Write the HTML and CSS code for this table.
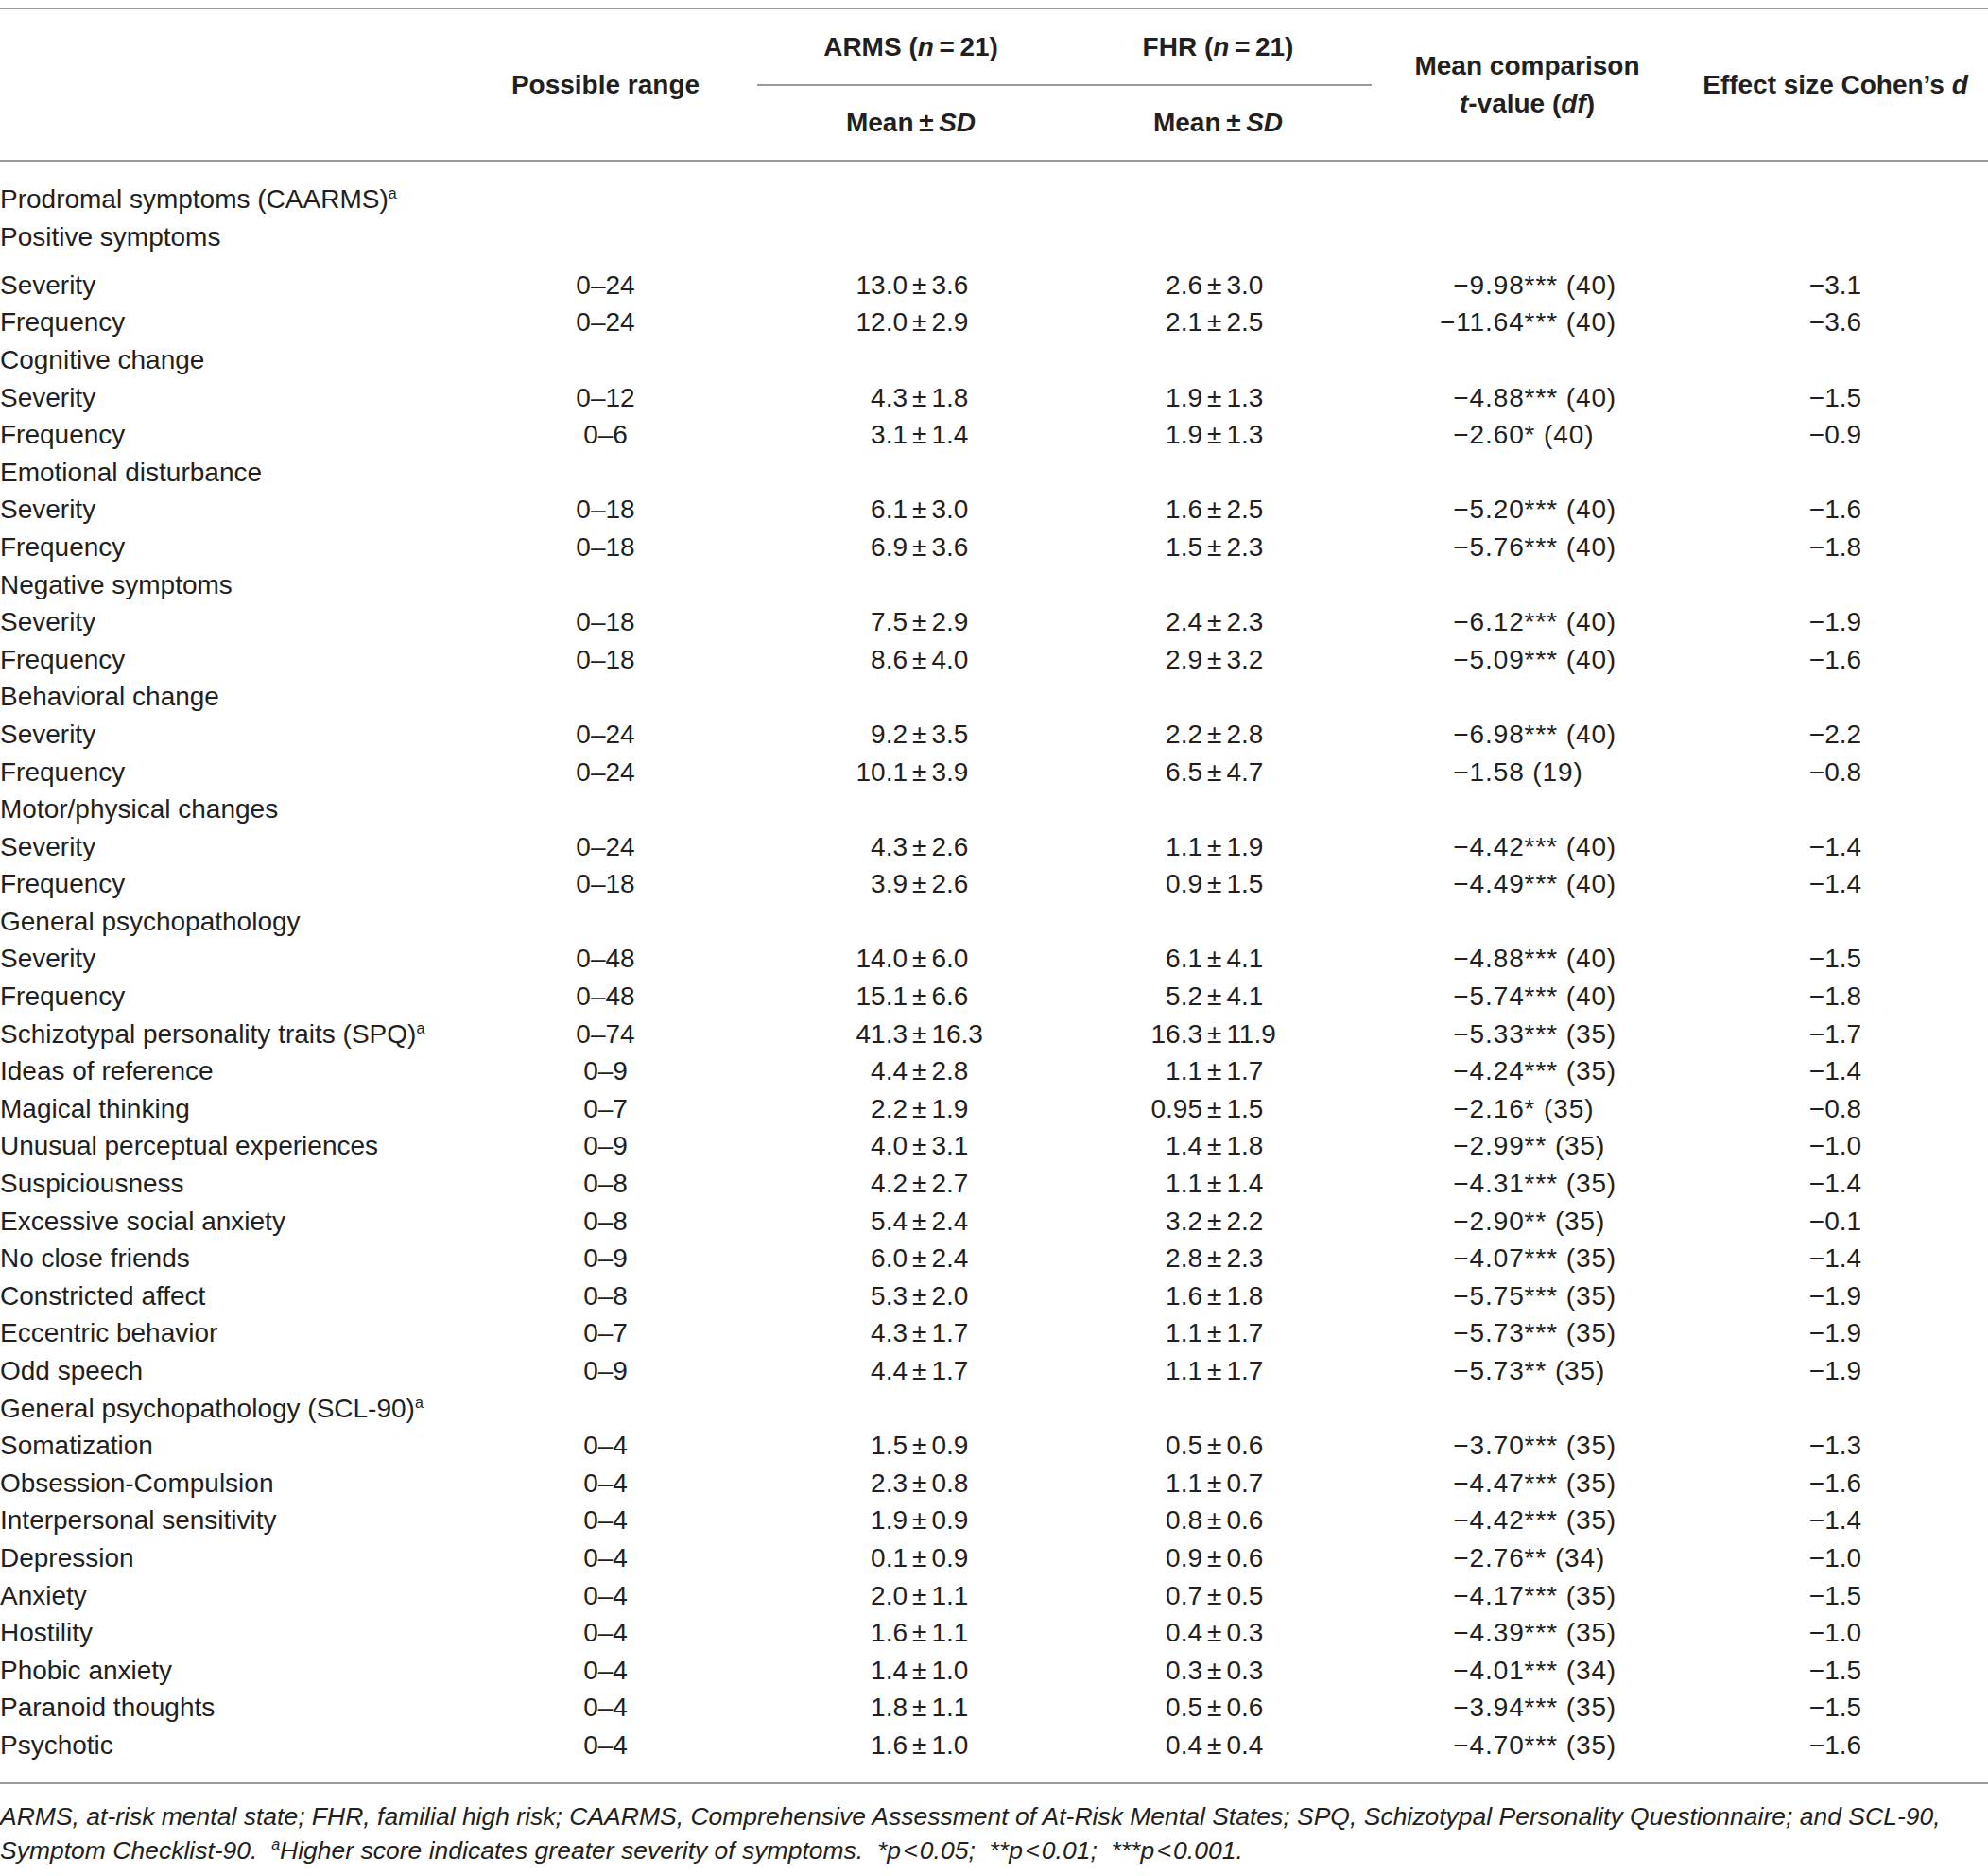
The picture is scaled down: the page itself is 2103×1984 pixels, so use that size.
FILE: index.html
```html
<!DOCTYPE html>
<html lang="en">
<head>
<meta charset="utf-8">
<title>ARMS vs FHR comparison</title>
<link rel="stylesheet" href="styles.css">
</head>
<body>
<table class="data">
  <colgroup>
    <col class="c-label"><col class="c-range"><col class="c-arms"><col class="c-fhr"><col class="c-t"><col class="c-d">
  </colgroup>
  <thead>
    <tr class="h1">
      <th></th>
      <th rowspan="2">Possible range</th>
      <th class="grp">ARMS (<i>n</i>&#8201;=&#8201;21)</th>
      <th class="grp">FHR (<i>n</i>&#8201;=&#8201;21)</th>
      <th rowspan="2" class="two">Mean comparison<br><i>t</i>-value (<i>df</i>)</th>
      <th rowspan="2">Effect size Cohen’s <i>d</i></th>
    </tr>
    <tr class="h2">
      <th></th>
      <th>Mean&#8201;±&#8201;<i>SD</i></th>
      <th>Mean&#8201;±&#8201;<i>SD</i></th>
    </tr>
  </thead>
  <tbody>
    <tr class="first"><td>Prodromal symptoms (CAARMS)<sup class="fn">a</sup></td><td></td><td></td><td></td><td></td><td></td></tr>
    <tr class="gap"><td>Positive symptoms</td><td></td><td></td><td></td><td></td><td></td></tr>
    <tr><td>Severity</td><td class="rg">0–24</td><td class="ms a"><span class="ml">13.0</span><span class="pm">±</span>3.6</td><td class="ms f"><span class="ml">2.6</span><span class="pm">±</span>3.0</td><td class="tv"><span class="tl">−9</span>.98*** (40)</td><td class="es">−3.1</td></tr>
    <tr><td>Frequency</td><td class="rg">0–24</td><td class="ms a"><span class="ml">12.0</span><span class="pm">±</span>2.9</td><td class="ms f"><span class="ml">2.1</span><span class="pm">±</span>2.5</td><td class="tv"><span class="tl">−11</span>.64*** (40)</td><td class="es">−3.6</td></tr>
    <tr><td>Cognitive change</td><td></td><td></td><td></td><td></td><td></td></tr>
    <tr><td>Severity</td><td class="rg">0–12</td><td class="ms a"><span class="ml">4.3</span><span class="pm">±</span>1.8</td><td class="ms f"><span class="ml">1.9</span><span class="pm">±</span>1.3</td><td class="tv"><span class="tl">−4</span>.88*** (40)</td><td class="es">−1.5</td></tr>
    <tr><td>Frequency</td><td class="rg">0–6</td><td class="ms a"><span class="ml">3.1</span><span class="pm">±</span>1.4</td><td class="ms f"><span class="ml">1.9</span><span class="pm">±</span>1.3</td><td class="tv"><span class="tl">−2</span>.60* (40)</td><td class="es">−0.9</td></tr>
    <tr><td>Emotional disturbance</td><td></td><td></td><td></td><td></td><td></td></tr>
    <tr><td>Severity</td><td class="rg">0–18</td><td class="ms a"><span class="ml">6.1</span><span class="pm">±</span>3.0</td><td class="ms f"><span class="ml">1.6</span><span class="pm">±</span>2.5</td><td class="tv"><span class="tl">−5</span>.20*** (40)</td><td class="es">−1.6</td></tr>
    <tr><td>Frequency</td><td class="rg">0–18</td><td class="ms a"><span class="ml">6.9</span><span class="pm">±</span>3.6</td><td class="ms f"><span class="ml">1.5</span><span class="pm">±</span>2.3</td><td class="tv"><span class="tl">−5</span>.76*** (40)</td><td class="es">−1.8</td></tr>
    <tr><td>Negative symptoms</td><td></td><td></td><td></td><td></td><td></td></tr>
    <tr><td>Severity</td><td class="rg">0–18</td><td class="ms a"><span class="ml">7.5</span><span class="pm">±</span>2.9</td><td class="ms f"><span class="ml">2.4</span><span class="pm">±</span>2.3</td><td class="tv"><span class="tl">−6</span>.12*** (40)</td><td class="es">−1.9</td></tr>
    <tr><td>Frequency</td><td class="rg">0–18</td><td class="ms a"><span class="ml">8.6</span><span class="pm">±</span>4.0</td><td class="ms f"><span class="ml">2.9</span><span class="pm">±</span>3.2</td><td class="tv"><span class="tl">−5</span>.09*** (40)</td><td class="es">−1.6</td></tr>
    <tr><td>Behavioral change</td><td></td><td></td><td></td><td></td><td></td></tr>
    <tr><td>Severity</td><td class="rg">0–24</td><td class="ms a"><span class="ml">9.2</span><span class="pm">±</span>3.5</td><td class="ms f"><span class="ml">2.2</span><span class="pm">±</span>2.8</td><td class="tv"><span class="tl">−6</span>.98*** (40)</td><td class="es">−2.2</td></tr>
    <tr><td>Frequency</td><td class="rg">0–24</td><td class="ms a"><span class="ml">10.1</span><span class="pm">±</span>3.9</td><td class="ms f"><span class="ml">6.5</span><span class="pm">±</span>4.7</td><td class="tv"><span class="tl">−1</span>.58 (19)</td><td class="es">−0.8</td></tr>
    <tr><td>Motor/physical changes</td><td></td><td></td><td></td><td></td><td></td></tr>
    <tr><td>Severity</td><td class="rg">0–24</td><td class="ms a"><span class="ml">4.3</span><span class="pm">±</span>2.6</td><td class="ms f"><span class="ml">1.1</span><span class="pm">±</span>1.9</td><td class="tv"><span class="tl">−4</span>.42*** (40)</td><td class="es">−1.4</td></tr>
    <tr><td>Frequency</td><td class="rg">0–18</td><td class="ms a"><span class="ml">3.9</span><span class="pm">±</span>2.6</td><td class="ms f"><span class="ml">0.9</span><span class="pm">±</span>1.5</td><td class="tv"><span class="tl">−4</span>.49*** (40)</td><td class="es">−1.4</td></tr>
    <tr><td>General psychopathology</td><td></td><td></td><td></td><td></td><td></td></tr>
    <tr><td>Severity</td><td class="rg">0–48</td><td class="ms a"><span class="ml">14.0</span><span class="pm">±</span>6.0</td><td class="ms f"><span class="ml">6.1</span><span class="pm">±</span>4.1</td><td class="tv"><span class="tl">−4</span>.88*** (40)</td><td class="es">−1.5</td></tr>
    <tr><td>Frequency</td><td class="rg">0–48</td><td class="ms a"><span class="ml">15.1</span><span class="pm">±</span>6.6</td><td class="ms f"><span class="ml">5.2</span><span class="pm">±</span>4.1</td><td class="tv"><span class="tl">−5</span>.74*** (40)</td><td class="es">−1.8</td></tr>
    <tr><td>Schizotypal personality traits (SPQ)<sup class="fn">a</sup></td><td class="rg">0–74</td><td class="ms a"><span class="ml">41.3</span><span class="pm">±</span>16.3</td><td class="ms f"><span class="ml">16.3</span><span class="pm">±</span>11.9</td><td class="tv"><span class="tl">−5</span>.33*** (35)</td><td class="es">−1.7</td></tr>
    <tr><td>Ideas of reference</td><td class="rg">0–9</td><td class="ms a"><span class="ml">4.4</span><span class="pm">±</span>2.8</td><td class="ms f"><span class="ml">1.1</span><span class="pm">±</span>1.7</td><td class="tv"><span class="tl">−4</span>.24*** (35)</td><td class="es">−1.4</td></tr>
    <tr><td>Magical thinking</td><td class="rg">0–7</td><td class="ms a"><span class="ml">2.2</span><span class="pm">±</span>1.9</td><td class="ms f"><span class="ml">0.95</span><span class="pm">±</span>1.5</td><td class="tv"><span class="tl">−2</span>.16* (35)</td><td class="es">−0.8</td></tr>
    <tr><td>Unusual perceptual experiences</td><td class="rg">0–9</td><td class="ms a"><span class="ml">4.0</span><span class="pm">±</span>3.1</td><td class="ms f"><span class="ml">1.4</span><span class="pm">±</span>1.8</td><td class="tv"><span class="tl">−2</span>.99** (35)</td><td class="es">−1.0</td></tr>
    <tr><td>Suspiciousness</td><td class="rg">0–8</td><td class="ms a"><span class="ml">4.2</span><span class="pm">±</span>2.7</td><td class="ms f"><span class="ml">1.1</span><span class="pm">±</span>1.4</td><td class="tv"><span class="tl">−4</span>.31*** (35)</td><td class="es">−1.4</td></tr>
    <tr><td>Excessive social anxiety</td><td class="rg">0–8</td><td class="ms a"><span class="ml">5.4</span><span class="pm">±</span>2.4</td><td class="ms f"><span class="ml">3.2</span><span class="pm">±</span>2.2</td><td class="tv"><span class="tl">−2</span>.90** (35)</td><td class="es">−0.1</td></tr>
    <tr><td>No close friends</td><td class="rg">0–9</td><td class="ms a"><span class="ml">6.0</span><span class="pm">±</span>2.4</td><td class="ms f"><span class="ml">2.8</span><span class="pm">±</span>2.3</td><td class="tv"><span class="tl">−4</span>.07*** (35)</td><td class="es">−1.4</td></tr>
    <tr><td>Constricted affect</td><td class="rg">0–8</td><td class="ms a"><span class="ml">5.3</span><span class="pm">±</span>2.0</td><td class="ms f"><span class="ml">1.6</span><span class="pm">±</span>1.8</td><td class="tv"><span class="tl">−5</span>.75*** (35)</td><td class="es">−1.9</td></tr>
    <tr><td>Eccentric behavior</td><td class="rg">0–7</td><td class="ms a"><span class="ml">4.3</span><span class="pm">±</span>1.7</td><td class="ms f"><span class="ml">1.1</span><span class="pm">±</span>1.7</td><td class="tv"><span class="tl">−5</span>.73*** (35)</td><td class="es">−1.9</td></tr>
    <tr><td>Odd speech</td><td class="rg">0–9</td><td class="ms a"><span class="ml">4.4</span><span class="pm">±</span>1.7</td><td class="ms f"><span class="ml">1.1</span><span class="pm">±</span>1.7</td><td class="tv"><span class="tl">−5</span>.73** (35)</td><td class="es">−1.9</td></tr>
    <tr><td>General psychopathology (SCL-90)<sup class="fn">a</sup></td><td></td><td></td><td></td><td></td><td></td></tr>
    <tr><td>Somatization</td><td class="rg">0–4</td><td class="ms a"><span class="ml">1.5</span><span class="pm">±</span>0.9</td><td class="ms f"><span class="ml">0.5</span><span class="pm">±</span>0.6</td><td class="tv"><span class="tl">−3</span>.70*** (35)</td><td class="es">−1.3</td></tr>
    <tr><td>Obsession-Compulsion</td><td class="rg">0–4</td><td class="ms a"><span class="ml">2.3</span><span class="pm">±</span>0.8</td><td class="ms f"><span class="ml">1.1</span><span class="pm">±</span>0.7</td><td class="tv"><span class="tl">−4</span>.47*** (35)</td><td class="es">−1.6</td></tr>
    <tr><td>Interpersonal sensitivity</td><td class="rg">0–4</td><td class="ms a"><span class="ml">1.9</span><span class="pm">±</span>0.9</td><td class="ms f"><span class="ml">0.8</span><span class="pm">±</span>0.6</td><td class="tv"><span class="tl">−4</span>.42*** (35)</td><td class="es">−1.4</td></tr>
    <tr><td>Depression</td><td class="rg">0–4</td><td class="ms a"><span class="ml">0.1</span><span class="pm">±</span>0.9</td><td class="ms f"><span class="ml">0.9</span><span class="pm">±</span>0.6</td><td class="tv"><span class="tl">−2</span>.76** (34)</td><td class="es">−1.0</td></tr>
    <tr><td>Anxiety</td><td class="rg">0–4</td><td class="ms a"><span class="ml">2.0</span><span class="pm">±</span>1.1</td><td class="ms f"><span class="ml">0.7</span><span class="pm">±</span>0.5</td><td class="tv"><span class="tl">−4</span>.17*** (35)</td><td class="es">−1.5</td></tr>
    <tr><td>Hostility</td><td class="rg">0–4</td><td class="ms a"><span class="ml">1.6</span><span class="pm">±</span>1.1</td><td class="ms f"><span class="ml">0.4</span><span class="pm">±</span>0.3</td><td class="tv"><span class="tl">−4</span>.39*** (35)</td><td class="es">−1.0</td></tr>
    <tr><td>Phobic anxiety</td><td class="rg">0–4</td><td class="ms a"><span class="ml">1.4</span><span class="pm">±</span>1.0</td><td class="ms f"><span class="ml">0.3</span><span class="pm">±</span>0.3</td><td class="tv"><span class="tl">−4</span>.01*** (34)</td><td class="es">−1.5</td></tr>
    <tr><td>Paranoid thoughts</td><td class="rg">0–4</td><td class="ms a"><span class="ml">1.8</span><span class="pm">±</span>1.1</td><td class="ms f"><span class="ml">0.5</span><span class="pm">±</span>0.6</td><td class="tv"><span class="tl">−3</span>.94*** (35)</td><td class="es">−1.5</td></tr>
    <tr class="last"><td>Psychotic</td><td class="rg">0–4</td><td class="ms a"><span class="ml">1.6</span><span class="pm">±</span>1.0</td><td class="ms f"><span class="ml">0.4</span><span class="pm">±</span>0.4</td><td class="tv"><span class="tl">−4</span>.70*** (35)</td><td class="es">−1.6</td></tr>
  </tbody>
</table>
<p class="note">ARMS, at-risk mental state; FHR, familial high risk; CAARMS, Comprehensive Assessment of At-Risk Mental States; SPQ, Schizotypal Personality Questionnaire; and SCL-90,<br>Symptom Checklist-90.&nbsp; <sup class="fn">a</sup>Higher score indicates greater severity of symptoms.&nbsp; *<i>p</i>&#8202;&lt;&#8202;0.05;&nbsp; **<i>p</i>&#8202;&lt;&#8202;0.01;&nbsp; ***<i>p</i>&#8202;&lt;&#8202;0.001.</p>
</body>
</html>
```
FILE: styles.css
```css
html, body {
  margin: 0;
  padding: 0;
  background: #ffffff;
}

body {
  width: 2103px;
  font-family: "Liberation Sans", Arial, Helvetica, sans-serif;
  color: #231f20;
  font-size: 28px;
}

.data {
  width: 2103px;
  margin-top: 8px;
  border-collapse: collapse;
  table-layout: fixed;
  border-top: 2px solid #9a9a9a;
  border-bottom: 2px solid #9a9a9a;
}

.c-label { width: 480px; }
.c-range { width: 321px; }
.c-arms { width: 325px; }
.c-fhr { width: 325px; }
.c-t { width: 329px; }
.c-d { width: 323px; }

.data th {
  font-weight: bold;
  padding: 0;
  text-align: center;
  vertical-align: middle;
  line-height: 40px;
  white-space: nowrap;
}

.data thead {
  border-bottom: 2px solid #9a9a9a;
}

.h1 th { height: 79px; }
.h2 th { height: 78px; }

.data th.grp {
  border-bottom: 2px solid #9a9a9a;
}

.data td {
  padding: 0;
  height: 39.6px;
  line-height: 39.6px;
  white-space: nowrap;
  vertical-align: middle;
}

.data tr.first td {
  padding-top: 20px;
}

.data tr.gap td {
  height: 51.2px;
  vertical-align: top;
}

.data tr.last td {
  padding-bottom: 19px;
}

.data td.rg { text-align: center; }

.data td.ms { text-align: left; }
.data td.ms.a { padding-left: 99px; }
.data td.ms.f { padding-left: 86px; }

.ml {
  display: inline-block;
  width: 60px;
  text-align: right;
}

.pm {
  margin: 0 5px;
}

.data td.tv {
  padding-left: 60px;
  letter-spacing: 0.9px;
}

.tl {
  display: inline-block;
  width: 60px;
  text-align: right;
}

.data td.es {
  text-align: center;
}

sup.fn {
  font-size: 16px;
  line-height: 0;
  vertical-align: 10px;
}

.note {
  margin: 0;
  padding-top: 16px;
  font-style: italic;
  font-size: 26.5px;
  line-height: 36px;
  white-space: nowrap;
}

.note i { font-style: italic; }
```
